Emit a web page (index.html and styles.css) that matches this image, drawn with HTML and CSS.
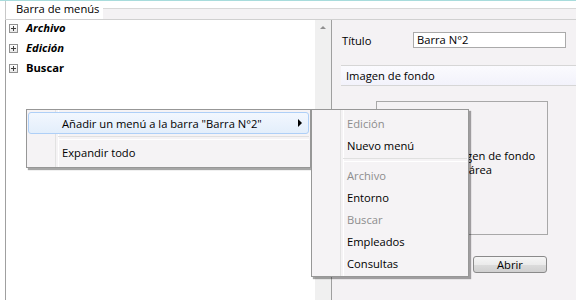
FILE: index.html
```html
<!DOCTYPE html>
<html lang="es">
<head>
<meta charset="utf-8">
<link rel="stylesheet" href="styles.css">
</head>
<body>
<div class="app">
  <div class="group-head">
    <span class="legend">Barra de menús</span>
    <div class="head-rule"></div>
  </div>
  <div class="panels">
    <div class="tree">
      <div class="tree-list">
        <div class="node"><span class="plus"></span><span class="lbl bi">Archivo</span></div>
        <div class="node"><span class="plus"></span><span class="lbl bi">Edición</span></div>
        <div class="node"><span class="plus"></span><span class="lbl b">Buscar</span></div>
      </div>
      <div class="vscroll"><span class="up"></span></div>
    </div>
    <div class="props">
      <div class="row">
        <span class="label">Título</span>
        <div class="input">Barra N°2</div>
      </div>
      <div class="section">Imagen de fondo</div>
      <div class="imgbox">
        <div class="imgtext">Sin imagen de fondo<br>en esta área</div>
      </div>
      <div class="btnrow"><div class="btn">Abrir</div></div>
    </div>
  </div>

  <div class="menu menu1">
    <div class="item hot"><span>Añadir un menú a la barra "Barra N°2"</span><span class="arrow"></span></div>
    <div class="sep"></div>
    <div class="item"><span>Expandir todo</span></div>
  </div>

  <div class="menu menu2">
    <div class="item dis"><span>Edición</span></div>
    <div class="item"><span>Nuevo menú</span></div>
    <div class="sep sep2"></div>
    <div class="item dis"><span>Archivo</span></div>
    <div class="item"><span>Entorno</span></div>
    <div class="item dis"><span>Buscar</span></div>
    <div class="item"><span>Empleados</span></div>
    <div class="item"><span>Consultas</span></div>
  </div>
</div>
</body>
</html>
```

FILE: styles.css
```css
* { box-sizing: border-box; }
html, body { margin: 0; padding: 0; }
body {
  width: 576px;
  height: 300px;
  overflow: hidden;
  background: #fff;
  font-family: "Open Sans", "Noto Sans", sans-serif;
  font-size: 11.2px;
  color: #000;
}
.app {
  position: relative;
  width: 576px;
  height: 300px;
  display: flex;
  flex-direction: column;
  border-top: 1px solid #a8dcdc;
}
.group-head {
  height: 18px;
  display: flex;
  align-items: flex-start;
  padding-left: 5px;
  border-left: 1px solid #c8c8c8;
  margin-left: 5px;
}
.legend {
  padding: 0 4px 0 5px;
  line-height: 16px;
  white-space: nowrap;
}
.head-rule {
  flex: 1;
  margin-top: 7px;
  height: 11px;
  border-top: 1px solid #d8d8d8;
  background: #f4f2f4;
}
.panels {
  flex: 1;
  display: flex;
  border-top: 1px solid #d0d0d0;
  margin-left: 5px;
}
.tree {
  width: 327px;
  display: flex;
  border-left: 1px solid #a0a0a0;
  border-right: 1px solid #a0a0a0;
  background: #fff;
}
.tree-list { flex: 1; }
.node {
  height: 20px;
  display: flex;
  align-items: center;
  padding-left: 3px;
}
.node:first-child { margin-top: -2px; }
.plus {
  position: relative;
  width: 9px;
  height: 9px;
  border: 1px solid #919191;
  background: linear-gradient(#ffffff, #e8e8e8);
  margin-right: 8px;
}
.plus::before, .plus::after {
  content: "";
  position: absolute;
  background: #404040;
}
.plus::before { left: 1px; top: 3px; width: 5px; height: 1px; }
.plus::after { left: 3px; top: 1px; width: 1px; height: 5px; }
.lbl { line-height: 16px; }
.b { font-weight: 700; }
.bi { font-weight: 700; font-style: italic; }
.vscroll {
  width: 16px;
  background: #f0f0f0;
  display: flex;
  justify-content: center;
  padding-top: 6px;
}
.up {
  width: 0; height: 0;
  border-left: 3px solid transparent;
  border-right: 3px solid transparent;
  border-bottom: 3px solid #909090;
}
.props {
  flex: 1;
  background: #f4f2f4;
  padding: 12px 0 0 9px;
  display: flex;
  flex-direction: column;
}
.row {
  display: flex;
  align-items: center;
  height: 16px;
}
.label { width: 72px; padding-left: 1px; }
.input {
  width: 153px;
  height: 16px;
  border: 1px solid #aaaaaa;
  background: #fff;
  padding-left: 3px;
  line-height: 14px;
}
.section {
  margin-top: 17px;
  height: 21px;
  border-top: 1px solid #d6d6d6;
  border-bottom: 1px solid #d6d6d6;
  background: linear-gradient(#fbfbfe, #f2f2fb);
  padding-left: 5px;
  line-height: 19px;
}
.imgbox {
  margin: 15px 0 0 35px;
  width: 172px;
  height: 134px;
  border: 1px solid #a8a8a8;
  padding: 47px 0 0 51px;
}
.imgtext { line-height: 14px; }
.btnrow {
  display: flex;
  justify-content: flex-start;
  padding: 21px 0 0 132px;
}
.btn {
  width: 74px;
  height: 17px;
  border: 1px solid #8a8a8a;
  border-radius: 3px;
  background: linear-gradient(#f6f6f6 0%, #ebebeb 50%, #dcdcdc 51%, #d0d0d0 100%);
  text-align: center;
  line-height: 15px;
}

/* context menus */
.menu {
  position: absolute;
  background: #f5f3f5;
  border: 1px solid #979797;
  box-shadow: 2px 2px 1px rgba(0,0,0,0.35);
}
.menu::before {
  content: "";
  position: absolute;
  top: 0; bottom: 0;
  left: 28px;
  width: 2px;
  border-left: 1px solid #e2e2e2;
  border-right: 1px solid #ffffff;
}
.menu1 {
  left: 26px;
  top: 108px;
  width: 285px;
  height: 59px;
  padding: 2px 1px 1px 1px;
}
.menu2 {
  left: 311px;
  top: 108px;
  width: 158px;
  height: 168px;
  padding: 2px 1px 1px 1px;
}
.item {
  position: relative;
  z-index: 1;
  height: 22px;
  display: flex;
  align-items: center;
  padding-left: 33px;
  white-space: nowrap;
  border: 1px solid transparent;
  border-radius: 3px;
}
.item.hot {
  border-color: #aecff7;
  background: linear-gradient(#f2f7fe, #e3eefb);
}
.item.dis { color: #8d8d8d; }
.arrow {
  position: absolute;
  right: 6px;
  top: 6px;
  width: 0; height: 0;
  border-top: 4px solid transparent;
  border-bottom: 4px solid transparent;
  border-left: 4px solid #000;
}
.sep {
  position: relative;
  z-index: 1;
  height: 7px;
  margin-left: 30px;
  display: flex;
  align-items: center;
}
.sep::before {
  content: "";
  flex: 1;
  height: 2px;
  border-top: 1px solid #e0e0e0;
  border-bottom: 1px solid #ffffff;
}
.sep2 { height: 8px; }
```
